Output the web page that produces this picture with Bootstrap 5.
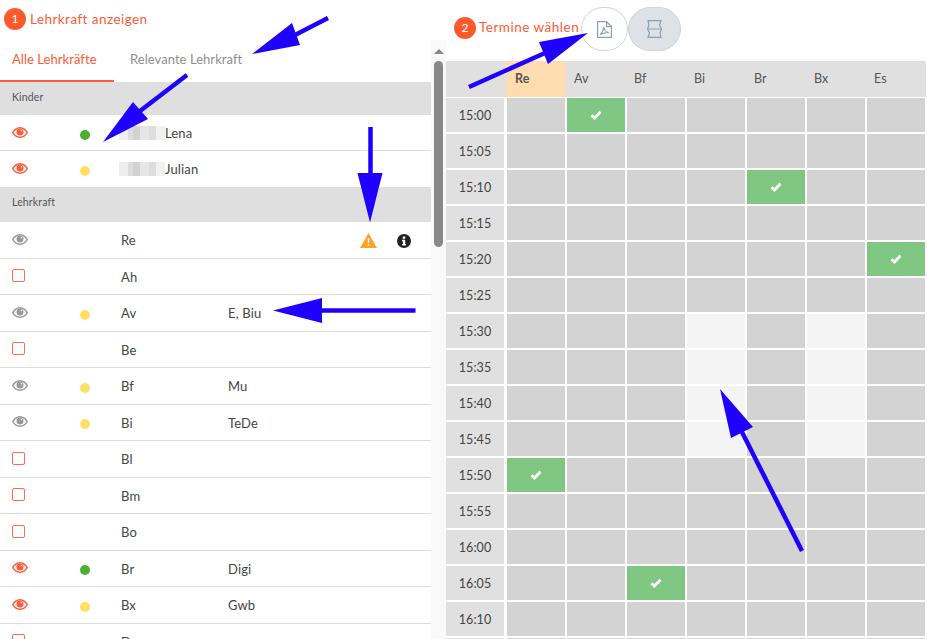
<!DOCTYPE html>
<html lang="de"><head><meta charset="utf-8"><title>Termine</title>
<link rel="stylesheet" href="https://cdn.jsdelivr.net/npm/bootstrap@5.3.0/dist/css/bootstrap.min.css">
<style>
html,body{height:639px;overflow:hidden}
body{font-family:"Lato","Open Sans",sans-serif;font-size:13px;letter-spacing:.15px;color:#444;background:#fff;width:927px;position:relative}
.page{height:639px}
.pane-left{width:431px;flex:none}
.head-left{height:38px;padding-left:4px;margin-bottom:2px;color:#ff5a36;font-size:13.5px;letter-spacing:.45px}
.step{width:22px;height:22px;border-radius:50%;background:#ff5a2d;color:#fff;font-size:12px;letter-spacing:0;flex:none}
.tabs-x{height:42px;border:0}
.tabs-x .nav-link{border:0;border-radius:0;color:#8f8f8f;padding:0 16px;height:42px;line-height:39px;font-size:13px;letter-spacing:.05px}
.tabs-x .nav-link.active{color:#ff5a36;padding:0 0 0 12px;width:114px;border-bottom:2px solid #ff5a36;background:none}
.tbl{table-layout:fixed;width:431px;margin:0;border-collapse:separate;border-spacing:0}
.tbl td{padding:2px 0 0;height:36.5px;vertical-align:middle;border:0;border-bottom:1px solid #dcdcdc;color:#444;background:none;box-shadow:none}
.tbl tr.kid td{height:36px}
.tbl tr.sect td{height:33px;background:#dfdfdf;border:0;padding:0 0 1px 12px;font-size:10.5px;color:#555}
.tbl tr.sect2 td{height:35px;padding-bottom:3px}
.tbl tr.noline td{border-bottom:0}
.tbl svg{display:block}
.dotx{width:10px;height:10px;border-radius:50%;margin-top:2px}
.dot-g{background:#4caf2f}.dot-y{background:#ffe066}
.boxx{width:13px;height:13px;border:1.5px solid #ff6a50;border-radius:2px;background:#fff;margin-top:-4px}
.blurx{display:inline-block;width:46px;height:14px;margin-left:-2px;vertical-align:-2px;background:linear-gradient(90deg,#eee 0 20%,#ddd 20% 30%,#d2d2d2 30% 45%,#e6e6e6 45% 65%,#ddd 65% 80%,#f1f1f1 80%)}
.eyex{margin-top:-3px;margin-left:12px}
.sb{width:15px;flex:none;background:#f9f9f9;margin-top:40px;position:relative}
.sb-up{width:0;height:0;border:5px solid transparent;border-top:0;border-bottom:5px solid #888;margin:9px auto 0 3px}
.sb-th{width:9px;height:186px;border-radius:5px;background:#888;margin:7px 0 0 3px}
.pane-right{width:481px;flex:none}
.head-right{height:61px;padding:0 0 6px 8px;color:#ff5a36;font-size:13.5px;letter-spacing:.5px}
.ttl{width:102px;margin-left:3px;white-space:nowrap;flex:none}
.pillx{height:44px;padding:0;border:1px solid #ced4da;border-radius:22px;background:#fff;margin-top:3px}
.pill-a{width:47px}.pill-b{width:53px;background:#dee2e6}
.gridx{display:grid;grid-template-columns:repeat(8,60px);grid-auto-rows:36px;width:481px}
.hd{background:#e0e0e0;padding-left:8px;line-height:36px;font-size:12.500px;color:#555}
.hd-re{background:#fddcb0;font-weight:700;padding-left:9px}
.tm{background:#e0e0e0;margin:1px 2px 1px 0;line-height:35px;text-align:center;font-size:12.500px;letter-spacing:.1px}
.ce{background:#d3d3d3;margin:1px}
.ce-l{background:#f4f4f4}
.ce-k{background:#81c784}
.fill-end{background:#e0e0e0}
.arrows{position:absolute;left:0;top:0;width:927px;height:639px;pointer-events:none}
</style></head><body>
<svg width="0" height="0" class="d-none"><defs>
<symbol id="eye" viewBox="0 0 16 11"><path fill="currentColor" fill-rule="evenodd" d="M8 0c3.500 0 6.400 2.200 8 5.500C14.400 8.800 11.500 11 8 11S1.600 8.800 0 5.500C1.600 2.200 4.500 0 8 0zM8 1.400C5.300 1.400 3 3.100 1.600 5.500 3 7.900 5.300 9.600 8 9.600s5-1.700 6.400-4.100C13 3.100 10.700 1.400 8 1.400z"/><circle cx="8" cy="5" r="3.500" fill="currentColor"/><circle cx="9.400" cy="3.600" r=".8" fill="#fff"/></symbol>
<symbol id="chk" viewBox="0 0 12 10"><path d="M1.500 5.200 4.500 8 10.500 1.800" fill="none" stroke="#fff" stroke-width="2.800"/></symbol>
</defs></svg>
<div class="page d-flex">
 <div class="pane-left">
  <div class="head-left d-flex align-items-center gap-1"><span class="step d-flex align-items-center justify-content-center">1</span><span>Lehrkraft anzeigen</span></div>
  <ul class="nav nav-tabs tabs-x">
   <li class="nav-item"><a class="nav-link active" href="#">Alle Lehrkräfte</a></li>
   <li class="nav-item"><a class="nav-link" href="#">Relevante Lehrkraft</a></li>
  </ul>
  <table class="table tbl">
   <colgroup><col style="width:80px"><col style="width:41px"><col style="width:107px"><col style="width:132px"><col style="width:37px"><col style="width:34px"></colgroup>
   <tr class="sect"><td colspan="6">Kinder</td></tr>
   <tr class="kid"><td><svg class="eyex" width="16" height="11" color="#ff5a36"><use href="#eye"/></svg></td><td><div class="dotx dot-g"></div></td><td colspan="4"><span class="blurx"></span>Lena</td></tr>
   <tr class="kid noline"><td><svg class="eyex" width="16" height="11" color="#ff5a36"><use href="#eye"/></svg></td><td><div class="dotx dot-y"></div></td><td colspan="4"><span class="blurx"></span>Julian</td></tr>
   <tr class="sect sect2"><td colspan="6">Lehrkraft</td></tr>
   <tr><td><svg class="eyex" width="16" height="11" color="#999"><use href="#eye"/></svg></td><td></td><td>Re</td><td></td>
    <td><svg width="17" height="15" viewBox="0 0 17 15"><path fill="#ffa126" d="M8.500 0 17 15H0z"/><path fill="#fff" d="M7.700 5h1.600l-.2 5H7.900zM7.700 11h1.600v1.700H7.700z"/></svg></td>
    <td><svg width="14" height="14" viewBox="0 0 14 14"><circle cx="7" cy="7" r="7" fill="#222"/><path fill="#fff" d="M5.800 2.500h2.400v2.200H5.800zM5 5.800h3.200v4.200H9v1.500H5V10h.9V7.300H5z"/></svg></td></tr>
   <tr><td><div class="boxx eyex"></div></td><td></td><td>Ah</td><td colspan="3"></td></tr>
   <tr><td><svg class="eyex" width="16" height="11" color="#999"><use href="#eye"/></svg></td><td><div class="dotx dot-y"></div></td><td>Av</td><td colspan="3">E, Biu</td></tr>
   <tr><td><div class="boxx eyex"></div></td><td></td><td>Be</td><td colspan="3"></td></tr>
   <tr><td><svg class="eyex" width="16" height="11" color="#999"><use href="#eye"/></svg></td><td><div class="dotx dot-y"></div></td><td>Bf</td><td colspan="3">Mu</td></tr>
   <tr><td><svg class="eyex" width="16" height="11" color="#999"><use href="#eye"/></svg></td><td><div class="dotx dot-y"></div></td><td>Bi</td><td colspan="3">TeDe</td></tr>
   <tr><td><div class="boxx eyex"></div></td><td></td><td>Bl</td><td colspan="3"></td></tr>
   <tr><td><div class="boxx eyex"></div></td><td></td><td>Bm</td><td colspan="3"></td></tr>
   <tr><td><div class="boxx eyex"></div></td><td></td><td>Bo</td><td colspan="3"></td></tr>
   <tr><td><svg class="eyex" width="16" height="11" color="#ff5a36"><use href="#eye"/></svg></td><td><div class="dotx dot-g"></div></td><td>Br</td><td colspan="3">Digi</td></tr>
   <tr><td><svg class="eyex" width="16" height="11" color="#ff5a36"><use href="#eye"/></svg></td><td><div class="dotx dot-y"></div></td><td>Bx</td><td colspan="3">Gwb</td></tr>
   <tr><td><div class="boxx eyex"></div></td><td></td><td>Da</td><td colspan="3"></td></tr>
  </table>
 </div>
 <div class="sb"><div class="sb-up"></div><div class="sb-th"></div></div>
 <div class="pane-right">
  <div class="head-right d-flex align-items-center">
   <span class="step d-flex align-items-center justify-content-center">2</span><span class="ttl">Termine wählen</span>
   <div class="d-flex">
   <button class="btn pillx pill-a d-flex align-items-center justify-content-center"><svg width="15" height="17" viewBox="0 0 15 17" fill="none" stroke="#8ba0b4" stroke-width="1.200"><path d="M.6.600h9l4.800 5v10.800H.6zM9.600.6v5h4.800"/><path d="M3 13.500c2-1.500 3.500-4.500 3.700-7.500.4 3 2 5 5.300 5.500-3.500 0-6 .5-9 2z"/></svg></button>
   <button class="btn pillx pill-b d-flex align-items-center justify-content-center"><svg width="17" height="18" viewBox="0 0 17 18" fill="none" stroke="#8ba0b4" stroke-width="1.200"><path d="M2 .7h13l-1.500 4.300 2 4-1.500 4 1 4.300H2l1.500-4.300-2-4 1.500-4zM1.500 9h14"/></svg></button>
   </div>
  </div>
  <div class="gridx">
<div class="fill-end"></div><div class="hd hd-re">Re</div><div class="hd">Av</div><div class="hd">Bf</div><div class="hd">Bi</div><div class="hd">Br</div><div class="hd">Bx</div><div class="hd">Es</div>
<div class="tm">15:00</div><div class="ce"></div><div class="ce ce-k d-flex align-items-center justify-content-center"><svg width="12" height="10"><use href="#chk"/></svg></div><div class="ce"></div><div class="ce"></div><div class="ce"></div><div class="ce"></div><div class="ce"></div>
<div class="tm">15:05</div><div class="ce"></div><div class="ce"></div><div class="ce"></div><div class="ce"></div><div class="ce"></div><div class="ce"></div><div class="ce"></div>
<div class="tm">15:10</div><div class="ce"></div><div class="ce"></div><div class="ce"></div><div class="ce"></div><div class="ce ce-k d-flex align-items-center justify-content-center"><svg width="12" height="10"><use href="#chk"/></svg></div><div class="ce"></div><div class="ce"></div>
<div class="tm">15:15</div><div class="ce"></div><div class="ce"></div><div class="ce"></div><div class="ce"></div><div class="ce"></div><div class="ce"></div><div class="ce"></div>
<div class="tm">15:20</div><div class="ce"></div><div class="ce"></div><div class="ce"></div><div class="ce"></div><div class="ce"></div><div class="ce"></div><div class="ce ce-k d-flex align-items-center justify-content-center"><svg width="12" height="10"><use href="#chk"/></svg></div>
<div class="tm">15:25</div><div class="ce"></div><div class="ce"></div><div class="ce"></div><div class="ce"></div><div class="ce"></div><div class="ce"></div><div class="ce"></div>
<div class="tm">15:30</div><div class="ce"></div><div class="ce"></div><div class="ce"></div><div class="ce ce-l"></div><div class="ce"></div><div class="ce ce-l"></div><div class="ce"></div>
<div class="tm">15:35</div><div class="ce"></div><div class="ce"></div><div class="ce"></div><div class="ce ce-l"></div><div class="ce"></div><div class="ce ce-l"></div><div class="ce"></div>
<div class="tm">15:40</div><div class="ce"></div><div class="ce"></div><div class="ce"></div><div class="ce ce-l"></div><div class="ce"></div><div class="ce ce-l"></div><div class="ce"></div>
<div class="tm">15:45</div><div class="ce"></div><div class="ce"></div><div class="ce"></div><div class="ce ce-l"></div><div class="ce"></div><div class="ce ce-l"></div><div class="ce"></div>
<div class="tm">15:50</div><div class="ce ce-k d-flex align-items-center justify-content-center"><svg width="12" height="10"><use href="#chk"/></svg></div><div class="ce"></div><div class="ce"></div><div class="ce"></div><div class="ce"></div><div class="ce"></div><div class="ce"></div>
<div class="tm">15:55</div><div class="ce"></div><div class="ce"></div><div class="ce"></div><div class="ce"></div><div class="ce"></div><div class="ce"></div><div class="ce"></div>
<div class="tm">16:00</div><div class="ce"></div><div class="ce"></div><div class="ce"></div><div class="ce"></div><div class="ce"></div><div class="ce"></div><div class="ce"></div>
<div class="tm">16:05</div><div class="ce"></div><div class="ce"></div><div class="ce ce-k d-flex align-items-center justify-content-center"><svg width="12" height="10"><use href="#chk"/></svg></div><div class="ce"></div><div class="ce"></div><div class="ce"></div><div class="ce"></div>
<div class="tm">16:10</div><div class="ce"></div><div class="ce"></div><div class="ce"></div><div class="ce"></div><div class="ce"></div><div class="ce"></div><div class="ce"></div>
<div class="tm"></div><div class="ce"></div><div class="ce"></div><div class="ce"></div><div class="ce"></div><div class="ce"></div><div class="ce"></div><div class="ce"></div>
  </div>
 </div>
</div>
<svg class="arrows" viewBox="0 0 927 639" fill="#1f00ff" stroke="#1f00ff">
 <line x1="328" y1="18" x2="295" y2="35" stroke-width="4.500"/><polygon stroke="none" points="252,54 292,23 300,45"/>
 <line x1="187" y1="75" x2="140" y2="111" stroke-width="4.500"/><polygon stroke="none" points="103,142 133,102 148,119"/>
 <line x1="370.500" y1="127" x2="370.500" y2="175" stroke-width="4.500"/><polygon stroke="none" points="370,222.500 357.500,173 382.500,173"/>
 <line x1="415.500" y1="310.500" x2="320" y2="310.500" stroke-width="4.500"/><polygon stroke="none" points="273,310.500 322,298 322,323"/>
 <line x1="469" y1="87" x2="545" y2="53" stroke-width="4.500"/><polygon stroke="none" points="588,33 539,42 548,64"/>
 <line x1="802" y1="551" x2="742" y2="432" stroke-width="4.500"/><polygon stroke="none" points="720,389 731,438 753,427"/>
</svg>
<script src="https://cdn.jsdelivr.net/npm/bootstrap@5.3.0/dist/js/bootstrap.bundle.min.js"></script>
</body></html>
